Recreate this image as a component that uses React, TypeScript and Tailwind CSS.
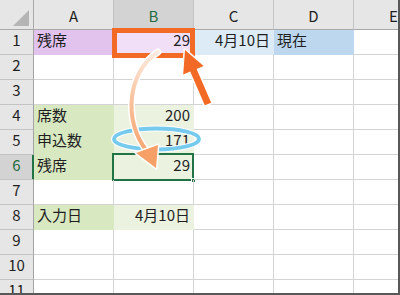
import React from "react";

type Cell = { text?: string; right?: boolean; cls?: string };

const PURPLE = "bg-[#e1c3ee] border-[#e1c3ee]";
const PURPLE_LIGHT = "bg-[#f1def7] border-[#f1def7]";
const BLUE_LIGHT = "bg-[#ddebf7] border-[#ddebf7]";
const BLUE = "bg-[#bdd7ee] border-[#bdd7ee]";
const GREEN = "bg-[#d8e9c2] border-[#d8e9c2]";
const GREEN_LIGHT = "bg-[#ebf2df] border-[#ebf2df]";

const data: Record<number, Cell[]> = {
  1: [
    { text: "残席", cls: PURPLE },
    { text: "29", right: true, cls: PURPLE_LIGHT },
    { text: "4月10日", right: true, cls: BLUE_LIGHT },
    { text: "現在", cls: BLUE },
  ],
  4: [
    { text: "席数", cls: GREEN },
    { text: "200", right: true, cls: GREEN_LIGHT },
  ],
  5: [
    { text: "申込数", cls: GREEN },
    { text: "171", right: true, cls: GREEN_LIGHT },
  ],
  6: [
    { text: "残席", cls: GREEN },
    { text: "29", right: true, cls: GREEN_LIGHT },
  ],
  8: [
    { text: "入力日", cls: GREEN },
    { text: "4月10日", right: true, cls: GREEN_LIGHT },
  ],
};

const cols = ["A", "B", "C", "D", "E"];
const rowNums = [1, 2, 3, 4, 5, 6, 7, 8, 9, 10, 11];

function Overlay() {
  return (
    <svg className="pointer-events-none absolute left-0 top-0" width="400" height="295" viewBox="0 0 400 295">
      <defs>
        <linearGradient id="curve" x1="0" y1="52" x2="0" y2="165" gradientUnits="userSpaceOnUse">
          <stop offset="0" stopColor="#fdebe0" />
          <stop offset="0.45" stopColor="#f9bf98" />
          <stop offset="1" stopColor="#f6a067" />
        </linearGradient>
      </defs>
      <rect x="114.5" y="30.5" width="78" height="25" fill="none" stroke="#f26a25" strokeWidth="5" />
      <ellipse cx="156.5" cy="139" rx="42.5" ry="10.5" fill="none" stroke="#ffffff" strokeWidth="6" />
      <ellipse cx="156.5" cy="139" rx="42.5" ry="10.5" fill="none" stroke="#76caee" strokeWidth="4" />
      <path d="M158,52 C127,72 123,122 147,151" fill="none" stroke="#ffffff" strokeWidth="7" strokeLinecap="round" />
      <path d="M158,52 C127,72 123,122 147,151" fill="none" stroke="url(#curve)" strokeWidth="4" strokeLinecap="round" />
      <polygon
        points="136,153 158,145 156,168"
        fill="#f6a067"
        stroke="#ffffff"
        strokeWidth="3"
        strokeLinejoin="round"
        paintOrder="stroke"
      />
      <polygon
        points="185,50 203.6,66.1 196.6,69 211.2,102.7 204.8,105.3 190.2,71.6 183.2,74.5"
        fill="#f26a25"
        stroke="#ffffff"
        strokeWidth="3"
        strokeLinejoin="round"
        paintOrder="stroke"
      />
    </svg>
  );
}

export default function App() {
  return (
    <div
      className="relative h-[295px] w-[400px] overflow-hidden border-b-2 border-r-2 border-[#585858] bg-white text-[15px] text-[#1f1f1f]"
      style={{ fontFamily: '"Noto Sans CJK JP", "Noto Sans", sans-serif' }}
    >
      <div className="grid w-[434px] grid-cols-[34px_80px_80px_80px_80px_80px] grid-rows-[30px_repeat(11,25px)]">
        <div className="relative border-b border-r border-b-[#a9a9a9] border-r-[#a9a9a9] bg-[#e6e6e6]">
          <svg className="absolute left-[12px] top-[9px]" width="18" height="18" viewBox="0 0 18 18">
            <polygon points="1,17 17,17 17,1" fill="#b5b5b5" />
          </svg>
        </div>
        {cols.map((c) => (
          <div
            key={c}
            className={
              c === "B"
                ? "flex items-center justify-center border-b border-r border-b-[#a9a9a9] border-r-[#c4c4c4] bg-[#d3d3d3] pt-[3px] text-[#1e6b3f]"
                : "flex items-center justify-center border-b border-r border-b-[#a9a9a9] border-r-[#c4c4c4] bg-[#e6e6e6] pt-[3px]"
            }
          >
            {c}
          </div>
        ))}
        {rowNums.map((r) => (
          <React.Fragment key={r}>
            <div
              className={
                r === 6
                  ? "flex items-center justify-center border-b border-r border-b-[#c3c3c3] border-r-[#217346] bg-[#d3d3d3] pb-[3px] text-[#1e6b3f] shadow-[inset_-1px_0_0_#217346]"
                  : "flex items-center justify-center border-b border-r border-b-[#c3c3c3] border-r-[#a3a3a3] bg-[#e6e6e6] pb-[3px]"
              }
            >
              {r}
            </div>
            {cols.map((c, i) => {
              const cell = data[r]?.[i];
              const selected = r === 6 && c === "B";
              return (
                <div
                  key={c}
                  className={`relative flex items-center whitespace-nowrap border-b border-r px-[3px] pb-[3px] ${
                    cell?.cls ?? "border-[#d4d4d4]"
                  } ${cell?.right ? "justify-end" : "justify-start"}`}
                >
                  {cell?.text}
                  {selected && (
                    <>
                      <div className="absolute -left-[2px] -top-[2px] bottom-[-2px] right-[-1px] border-2 border-[#217346]" />
                      <div className="absolute bottom-[-4px] right-[-3px] h-[5px] w-[5px] border border-white bg-[#217346]" />
                    </>
                  )}
                </div>
              );
            })}
          </React.Fragment>
        ))}
      </div>
      <Overlay />
    </div>
  );
}
